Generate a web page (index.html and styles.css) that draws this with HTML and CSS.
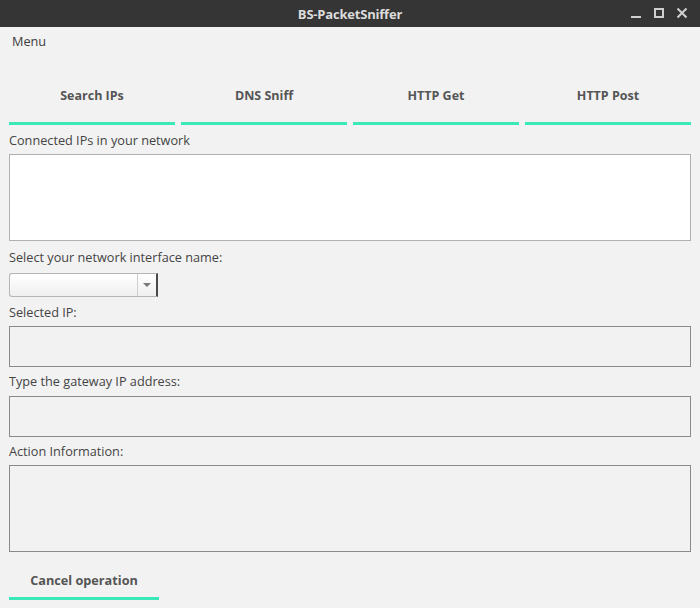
FILE: index.html
```html
<!DOCTYPE html>
<html>
<head>
<meta charset="utf-8">
<link rel="stylesheet" href="styles.css">
</head>
<body>
<div class="window">
  <div class="titlebar">
    <span class="title">BS-PacketSniffer</span>
    <div class="controls">
      <svg class="ctl" width="12" height="12" viewBox="0 0 12 12"><rect x="1" y="9" width="10" height="2" fill="#cfcfcf"/></svg>
      <svg class="ctl" width="12" height="12" viewBox="0 0 12 12"><rect x="2" y="2" width="8" height="8" fill="none" stroke="#cfcfcf" stroke-width="2"/></svg>
      <svg class="ctl" width="12" height="12" viewBox="0 0 12 12"><path d="M1.5 1.5 L10.5 10.5 M10.5 1.5 L1.5 10.5" stroke="#cfcfcf" stroke-width="2"/></svg>
    </div>
  </div>
  <div class="menubar"><span class="menu">Menu</span></div>
  <div class="content">
    <div class="tabs">
      <div class="tab">Search IPs</div>
      <div class="tab">DNS Sniff</div>
      <div class="tab">HTTP Get</div>
      <div class="tab">HTTP Post</div>
    </div>
    <div class="label l1">Connected IPs in your network</div>
    <div class="box white tall"></div>
    <div class="label l2">Select your network interface name:</div>
    <div class="combo">
      <div class="combo-field"></div>
      <div class="combo-btn"><svg width="8" height="5" viewBox="0 0 8 5"><path d="M0 0 H8 L4 4 Z" fill="#777"/></svg></div>
    </div>
    <div class="label l3">Selected IP:</div>
    <div class="box short"></div>
    <div class="label l4">Type the gateway IP address:</div>
    <div class="box short gw"></div>
    <div class="label l4">Action Information:</div>
    <div class="box tall"></div>
    <div class="cancel">Cancel operation</div>
  </div>
</div>
</body>
</html>
```
FILE: styles.css
```css
html, body {
  margin: 0;
  padding: 0;
}
body {
  width: 700px;
  height: 608px;
  background: #f2f2f2;
  font-family: "Open Sans", "DejaVu Sans", sans-serif;
  font-size: 12.7px;
  color: #3c3c3c;
  overflow: hidden;
}
.window {
  display: flex;
  flex-direction: column;
}
.titlebar {
  height: 27px;
  background: #353535;
  position: relative;
  display: flex;
  align-items: center;
  justify-content: center;
}
.title {
  color: #dcdcdc;
  font-weight: bold;
  font-size: 13px;
  letter-spacing: -0.2px;
}
.controls {
  position: absolute;
  right: 12px;
  top: 7px;
  display: flex;
  gap: 11px;
}
.ctl {
  display: block;
}
.menubar {
  height: 28px;
  display: flex;
  align-items: center;
  padding-left: 12px;
}
.menu {
  color: #3c3c3c;
}
.content {
  padding: 0 9px;
  display: flex;
  flex-direction: column;
}
.tabs {
  margin-top: 10px;
  display: flex;
  gap: 6px;
}
.tab {
  flex: 1;
  height: 53px;
  border-bottom: 3px solid #3be8b8;
  display: flex;
  align-items: center;
  justify-content: center;
  font-weight: bold;
  color: #555;
  font-size: 12.5px;
  padding-top: 4px;
  box-sizing: content-box;
}
.label {
  height: 18px;
  line-height: 18px;
  color: #444;
}
.l1 { margin-top: 6px; }
.l2 { margin-top: 7px; }
.l3 { margin-top: 6px; }
.l4 { margin-top: 5px; }
.box {
  margin-top: 5px;
  border: 1px solid #8a8a8a;
  box-sizing: border-box;
}
.box.gw {
  margin-top: 6px;
}
.box.white {
  background: #fff;
  border-color: #b0b0b0;
}
.tall { height: 87px; }
.short { height: 41px; }
.combo {
  margin-top: 7px;
  width: 149px;
  height: 24px;
  display: flex;
  box-sizing: border-box;
  border: 1px solid #b5b5b5;
  border-right: 2px solid #4a4a4a;
  border-radius: 3px 0 0 3px;
  background: linear-gradient(#ffffff, #efefef);
}
.combo-field {
  flex: 1;
}
.combo-btn {
  width: 18px;
  border-left: 1px solid #cfcfcf;
  display: flex;
  align-items: center;
  justify-content: center;
  padding-top: 1px;
}
.cancel {
  margin-top: 14px;
  width: 150px;
  height: 27px;
  border-bottom: 3px solid #3be8b8;
  font-weight: bold;
  color: #555;
  display: flex;
  align-items: center;
  justify-content: center;
  padding-bottom: 4px;
  box-sizing: content-box;
}
```
